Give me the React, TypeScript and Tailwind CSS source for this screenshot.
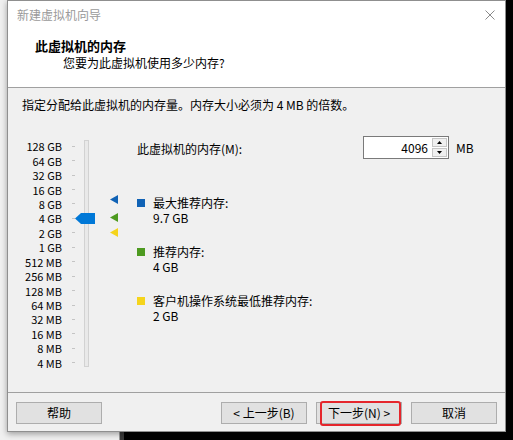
import React from "react";

const labels = [
  "128 GB", "64 GB", "32 GB", "16 GB", "8 GB", "4 GB", "2 GB", "1 GB",
  "512 MB", "256 MB", "128 MB", "64 MB", "32 MB", "16 MB", "8 MB", "4 MB",
];

const FONT = { fontFamily: '"Noto Sans CJK SC", "Noto Sans", sans-serif' };

function Btn({ children }: { children: React.ReactNode }) {
  return (
    <div className="w-[86px] h-[22px] bg-[#e1e1e1] border border-[#adadad] flex items-center justify-center text-[12px] leading-[16px] text-black">
      {children}
    </div>
  );
}

function Legend({ color, title, value }: { color: string; title: string; value: string }) {
  return (
    <div className="flex items-start">
      <div className={`w-[8px] h-[8px] mt-[3px] ${color}`} />
      <div className="ml-[8px] flex flex-col text-[12px] leading-[14.5px] text-black">
        <span>{title}</span>
        <span>{value}</span>
      </div>
    </div>
  );
}

export default function App() {
  return (
    <div className="relative w-[513px] h-[440px] bg-black overflow-hidden" style={FONT}>
      {/* background window */}
      <div className="absolute left-0 top-0 w-[120px] h-[440px] bg-[#f0f0f0] border-r border-[#9a9a9a]" />
      <div className="absolute left-[120px] top-0 w-[4px] h-[440px] bg-[#3a3a3a]" />

      {/* dialog */}
      <div className="absolute left-[7px] top-0 w-[499px] h-[432px] border border-[#8f8f8f] bg-[#f0f0f0] flex flex-col shadow-[0_2px_6px_rgba(0,0,0,0.35)]">
        {/* title bar */}
        <div className="h-[28px] bg-white flex items-center justify-between pl-[9px] pr-[10px]">
          <span className="text-[12px] leading-[16px] text-[#9a9a9a]">新建虚拟机向导</span>
          <svg width="10" height="10" viewBox="0 0 10 10">
            <path d="M0.5 0.5 L9.5 9.5 M9.5 0.5 L0.5 9.5" stroke="#8a8a8a" strokeWidth="1" fill="none" />
          </svg>
        </div>

        {/* header */}
        <div className="h-[59px] bg-white border-b border-[#a0a0a0] pt-[8px] flex flex-col">
          <span className="pl-[27px] text-[13px] leading-[18px] font-bold text-black">此虚拟机的内存</span>
          <span className="pl-[55px] text-[12px] leading-[16px] text-black">您要为此虚拟机使用多少内存?</span>
        </div>

        {/* body */}
        <div className="flex-1 flex flex-col pt-[9px]">
          <span className="pl-[14px] text-[12px] leading-[16px] text-black">
            指定分配给此虚拟机的内存量。内存大小必须为 4 MB 的倍数。
          </span>

          <div className="mt-[23px] pl-[18px] flex">
            {/* labels */}
            <div className="w-[36px] pt-[3px] flex flex-col">
              {labels.map((l) => (
                <div key={l} className="h-[14.45px] flex items-center justify-end text-[11px] leading-[12px] text-black whitespace-nowrap">
                  {l}
                </div>
              ))}
            </div>

            {/* slider */}
            <div className="relative w-[75px] h-[235px] flex">
              <div className="ml-[10px] w-[3px] pt-[3px] flex flex-col">
                {labels.map((l) => (
                  <div key={l} className="h-[14.45px] flex items-center">
                    <div className="w-[3px] h-[1px] bg-[#c4c4c4]" />
                  </div>
                ))}
              </div>
              <div className="ml-[9px] mt-[4px] w-[5px] h-[227px] bg-[#e9e9e9] border border-[#d2d2d2]" />

              {/* thumb */}
              <svg className="absolute left-[13px] top-[77px]" width="20" height="11" viewBox="0 0 20 11">
                <polygon points="0,5.5 6,0 20,0 20,11 6,11" fill="#0078d7" />
              </svg>
              {/* markers */}
              <svg className="absolute left-[48px] top-[59px]" width="8" height="9" viewBox="0 0 8 9">
                <polygon points="0,4.5 8,0 8,9" fill="#1062b5" />
              </svg>
              <svg className="absolute left-[48px] top-[77px]" width="8" height="9" viewBox="0 0 8 9">
                <polygon points="0,4.5 8,0 8,9" fill="#4d9a20" />
              </svg>
              <svg className="absolute left-[48px] top-[92px]" width="8" height="9" viewBox="0 0 8 9">
                <polygon points="0,4.5 8,0 8,9" fill="#f5d41c" />
              </svg>
            </div>

            {/* right column */}
            <div className="flex flex-col">
              <div className="h-[23px] flex items-center">
                <span className="w-[226px] text-[12px] leading-[16px] text-black pt-[2px]">此虚拟机的内存(M):</span>
                <div className="w-[86px] h-[23px] bg-white border border-[#7a7a7a] flex">
                  <div className="flex-1 flex items-center justify-end pr-[4px] text-[12px] leading-[16px] text-black">4096</div>
                  <div className="w-[16px] flex flex-col py-[1px] pr-[1px] gap-[1px]">
                    <div className="flex-1 bg-[#f0f0f0] border border-[#c6c6c6] flex items-center justify-center">
                      <svg width="5" height="3" viewBox="0 0 5 3"><polygon points="2.5,0 5,3 0,3" fill="#000" /></svg>
                    </div>
                    <div className="flex-1 bg-[#f0f0f0] border border-[#c6c6c6] flex items-center justify-center">
                      <svg width="5" height="3" viewBox="0 0 5 3"><polygon points="0,0 5,0 2.5,3" fill="#000" /></svg>
                    </div>
                  </div>
                </div>
                <span className="ml-[7px] text-[12px] leading-[16px] text-black">MB</span>
              </div>

              <div className="mt-[37px] flex flex-col gap-[20px]">
                <Legend color="bg-[#1062b5]" title="最大推荐内存:" value="9.7 GB" />
                <Legend color="bg-[#4d9a20]" title="推荐内存:" value="4 GB" />
                <Legend color="bg-[#f5d41c]" title="客户机操作系统最低推荐内存:" value="2 GB" />
              </div>
            </div>
          </div>
        </div>

        {/* footer */}
        <div className="h-[39px] border-t border-[#a0a0a0] pt-[9px] px-[8px] flex items-start">
          <Btn>帮助</Btn>
          <div className="ml-auto flex gap-[9px]">
            <Btn>&lt; 上一步(B)</Btn>
            <div className="relative">
              <Btn>下一步(N) &gt;</Btn>
              <div className="absolute left-[4px] right-[1px] top-[-1px] bottom-[-2px] border-2 border-[#e5262c] rounded-[3px]" />
            </div>
            <Btn>取消</Btn>
          </div>
        </div>
      </div>
    </div>
  );
}
